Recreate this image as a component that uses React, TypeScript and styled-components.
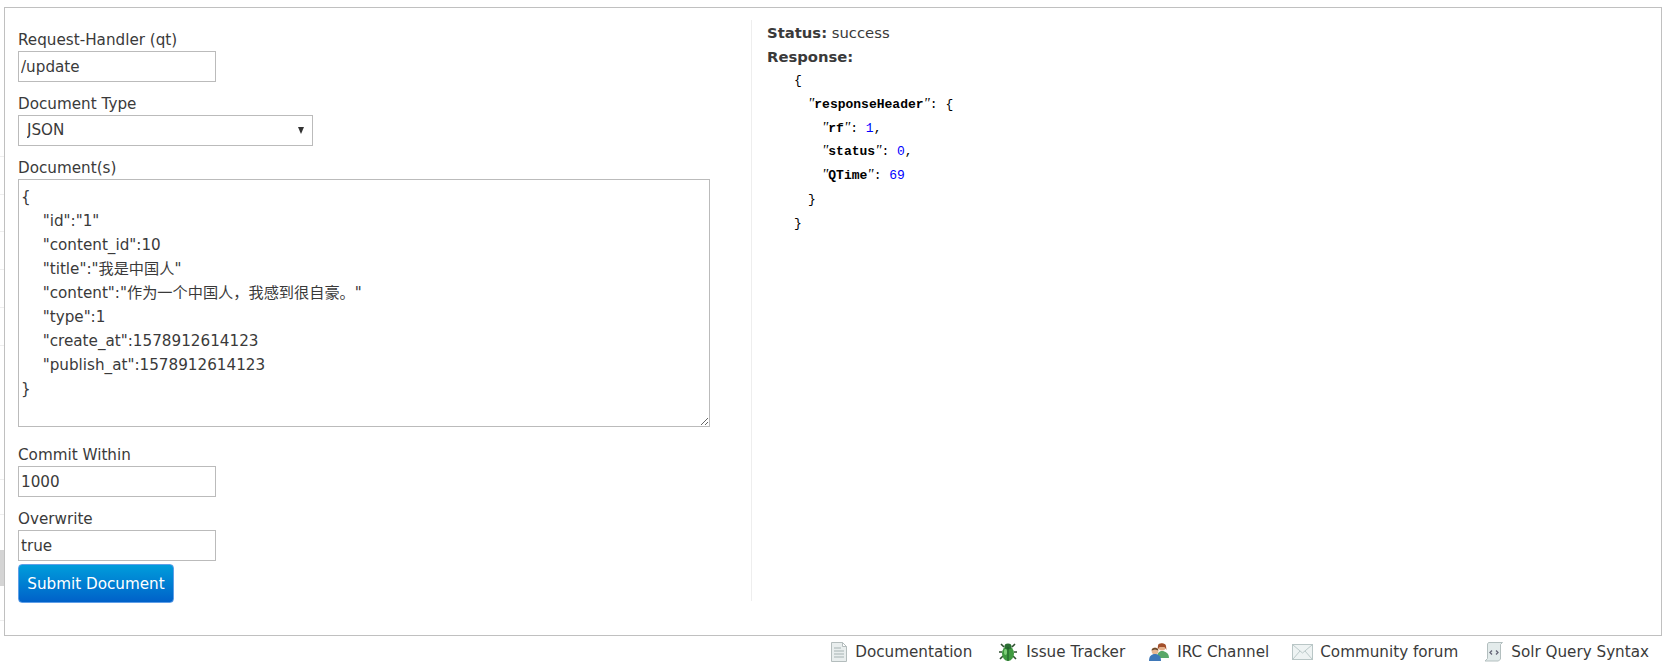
import styled, { createGlobalStyle } from 'styled-components';

const GlobalStyle = createGlobalStyle`
  html, body {
    margin: 0;
    padding: 0;
    background: #fff;
    color: #3a3a3a;
    font-family: 'DejaVu Sans', Verdana, 'Noto Sans CJK SC', sans-serif;
    font-size: 15.2px;
  }
`;

const Page = styled.div`
  position: relative;
  width: 1667px;
  height: 665px;
  overflow: hidden;
  padding: 7px 5px 0 4px;
  box-sizing: border-box;
`;

const Sidebar = styled.div`
  position: absolute;
  left: 0;
  top: 0;
  width: 4px;
`;

const SidebarRow = styled.div<{ $top: number; $height: number; $color: string }>`
  position: absolute;
  left: 0;
  width: 4px;
  top: ${(p) => p.$top}px;
  height: ${(p) => p.$height}px;
  background: ${(p) => p.$color};
`;

const Frame = styled.div`
  box-sizing: border-box;
  height: 629px;
  border: 1px solid #c0c0c0;
  padding: 12px 0 0 13px;
  display: flex;
  align-items: flex-start;
`;

const FormColumn = styled.form`
  width: 734px;
  height: 581px;
  padding-top: 10px;
  box-sizing: border-box;
  border-right: 1px solid #eee;
  flex-shrink: 0;
`;

const FieldLabel = styled.label`
  display: block;
  height: 21px;
  line-height: 20px;
  color: #3a3a3a;
  white-space: nowrap;
`;

const Field = styled.div`
  margin-bottom: 12px;
  &:last-of-type {
    margin-bottom: 3px;
  }
`;

const TextInput = styled.input`
  display: block;
  box-sizing: border-box;
  width: 198px;
  height: 31px;
  border: 1px solid #bbb;
  border-radius: 0;
  padding: 1px 2px 0;
  margin: 0;
  font: inherit;
  color: #3a3a3a;
  background: #fff;
  outline: none;
`;

const SelectWrap = styled.div`
  position: relative;
  width: 295px;
  &::after {
    content: '';
    position: absolute;
    right: 9px;
    top: 12px;
    border-left: 3.5px solid transparent;
    border-right: 3.5px solid transparent;
    border-top: 7px solid #333;
  }
`;

const Select = styled.select`
  display: block;
  box-sizing: border-box;
  width: 100%;
  height: 31px;
  border: 1px solid #bbb;
  border-radius: 0;
  padding: 0 8px 1px;
  margin: 0;
  font: inherit;
  color: #3a3a3a;
  background: #fff;
  appearance: none;
  outline: none;
`;

const DocumentArea = styled.textarea`
  display: block;
  box-sizing: border-box;
  width: 692px;
  height: 248px;
  margin: 0 0 18px;
  border: 1px solid #bbb;
  border-radius: 0;
  padding: 5px 2px;
  font: inherit;
  line-height: 24px;
  word-spacing: 0.6px;
  color: #3a3a3a;
  background: #fff;
  outline: none;
  resize: both;
  overflow: hidden;
`;

const SubmitButton = styled.button`
  display: block;
  box-sizing: border-box;
  width: 156px;
  height: 39px;
  padding: 0;
  border: 1px solid #5f9fe8;
  border-radius: 4px;
  background: linear-gradient(#009ddb, #0061c9);
  color: #fff;
  font: inherit;
`;

const ResultColumn = styled.div`
  padding: 1px 0 0 15px;
`;

const StatusLine = styled.div`
  height: 24px;
  line-height: 24px;
  color: #3a3a3a;
  font-size: 14.8px;
`;

const StrongLabel = styled.strong`
  font-weight: bold;
`;

const JsonLine = styled.div<{ $depth: number }>`
  height: 23.8px;
  line-height: 24px;
  padding-left: ${(p) => 27 + p.$depth * 14}px;
  font-family: 'Liberation Mono', monospace;
  font-size: 13px;
  color: #000;
  white-space: pre;
`;

const JsonKey = styled.b`
  font-weight: bold;
`;

const JsonQuote = styled.i`
  font-family: 'Liberation Serif', serif;
  font-size: 15px;
  line-height: 0;
  font-weight: normal;
`;

const JsonNumber = styled.span`
  color: #00f;
`;

const Footer = styled.div`
  display: flex;
  justify-content: flex-end;
  align-items: center;
  height: 31px;
  padding-right: 13px;
  font-size: 15.2px;
`;

const FooterLink = styled.a<{ $gap: number; $left: number }>`
  display: flex;
  align-items: center;
  gap: ${(p) => p.$gap}px;
  margin-left: ${(p) => p.$left}px;
  color: #3a3a3a;
  text-decoration: none;
  white-space: nowrap;
`;

const DocIcon = () => (
  <svg width="18" height="20" viewBox="0 0 18 20">
    <path d="M1.5.5h11l4 4v15h-15z" fill="#e9eeee" stroke="#b4bdbd" />
    <path d="M12.5.5v4h4z" fill="#fff" stroke="#b4bdbd" />
    <path d="M4 6h7M4 9h10M4 12h10M4 15h10" stroke="#bcc6c6" strokeWidth="1.4" />
  </svg>
);

const BugIcon = () => (
  <svg width="20" height="20" viewBox="0 0 20 20">
    <path
      d="M6 5 3 2M14 5l3-3M4 10H1M16 10h3M5 14l-3 3M15 14l3 3"
      stroke="#2f4f2f"
      strokeWidth="1.6"
    />
    <ellipse cx="10" cy="11.5" rx="6" ry="7.5" fill="#3f9a3f" />
    <ellipse cx="10" cy="4.5" rx="3.6" ry="3" fill="#2b6f33" />
    <path d="M10 5v14" stroke="#1f5a28" strokeWidth="1" />
    <ellipse cx="7.5" cy="10" rx="1.5" ry="3" fill="#7fcf78" />
  </svg>
);

const UsersIcon = () => (
  <svg width="22" height="20" viewBox="0 0 22 20">
    <circle cx="14" cy="5" r="3.6" fill="#e5b08a" />
    <path d="M10 3.5C10 .5 18 .5 18 4l.5 4-2-3h-5l-2 3z" fill="#a3502c" />
    <path d="M9 16c0-5 2-7 5-7s7 2 7 7z" fill="#5aa869" />
    <circle cx="7" cy="9" r="3.4" fill="#e8b893" />
    <path d="M3.6 8.5C3.5 4.8 10.5 4.8 10.4 8.5L7 7.4z" fill="#6a4a2c" />
    <path d="M1 19c0-5 2.500-7 6-7s6 2 6 7z" fill="#3f78b8" />
  </svg>
);

const MailIcon = () => (
  <svg width="21" height="16" viewBox="0 0 21 16">
    <rect x=".5" y=".5" width="20" height="15" fill="#eef3f3" stroke="#b9c6c6" />
    <path d="M1 1l9.500 8L20 1M1 15l7-8M20 15l-7-8" fill="none" stroke="#bccaca" />
  </svg>
);

const SyntaxIcon = () => (
  <svg width="20" height="21" viewBox="0 0 20 21">
    <path d="M4.500 1.500h14l-2 2v14.500l-2 2H1l2.500-2.500V3z" fill="#e3ebeb" stroke="#b3bfbf" />
    <path d="M8 9.500 6 11.500l2 2M12 9.500l2 2-2 2" fill="none" stroke="#667" strokeWidth="1.3" />
  </svg>
);

const sidebarRows = [
  { top: 156, height: 1, color: '#eee' },
  { top: 194, height: 1, color: '#eee' },
  { top: 231, height: 1, color: '#eee' },
  { top: 269, height: 1, color: '#eee' },
  { top: 307, height: 1, color: '#eee' },
  { top: 345, height: 1, color: '#eee' },
  { top: 479, height: 1, color: '#eee' },
  { top: 514, height: 1, color: '#eee' },
  { top: 550, height: 36, color: '#d4d4d4' },
  { top: 620, height: 1, color: '#eee' },
];

const documentText = `{
    "id":"1"
    "content_id":10
    "title":"我是中国人"
    "content":"作为一个中国人，我感到很自豪。"
    "type":1
    "create_at":1578912614123
    "publish_at":1578912614123
}`;

const Key = ({ name }: { name: string }) => (
  <>
    <JsonQuote>"</JsonQuote>
    <JsonKey>{name}</JsonKey>
    <JsonQuote>"</JsonQuote>
  </>
);

const App = () => (
  <Page>
    <GlobalStyle />
    <Sidebar>
      {sidebarRows.map((r) => (
        <SidebarRow key={r.top} $top={r.top} $height={r.height} $color={r.color} />
      ))}
    </Sidebar>
    <Frame>
      <FormColumn onSubmit={(e) => e.preventDefault()}>
        <Field>
          <FieldLabel>Request-Handler (qt)</FieldLabel>
          <TextInput defaultValue="/update" />
        </Field>
        <Field>
          <FieldLabel>Document Type</FieldLabel>
          <SelectWrap>
            <Select defaultValue="JSON">
              <option>JSON</option>
            </Select>
          </SelectWrap>
        </Field>
        <FieldLabel>Document(s)</FieldLabel>
        <DocumentArea defaultValue={documentText} />
        <Field>
          <FieldLabel>Commit Within</FieldLabel>
          <TextInput defaultValue="1000" />
        </Field>
        <Field>
          <FieldLabel>Overwrite</FieldLabel>
          <TextInput defaultValue="true" />
        </Field>
        <SubmitButton type="submit">Submit Document</SubmitButton>
      </FormColumn>
      <ResultColumn>
        <StatusLine>
          <StrongLabel>Status:</StrongLabel> success
        </StatusLine>
        <StatusLine>
          <StrongLabel>Response:</StrongLabel>
        </StatusLine>
        <JsonLine $depth={0}>{'{'}</JsonLine>
        <JsonLine $depth={1}>
          <Key name="responseHeader" />: {'{'}
        </JsonLine>
        <JsonLine $depth={2}>
          <Key name="rf" />: <JsonNumber>1</JsonNumber>,
        </JsonLine>
        <JsonLine $depth={2}>
          <Key name="status" />: <JsonNumber>0</JsonNumber>,
        </JsonLine>
        <JsonLine $depth={2}>
          <Key name="QTime" />: <JsonNumber>69</JsonNumber>
        </JsonLine>
        <JsonLine $depth={1}>{'}'}</JsonLine>
        <JsonLine $depth={0}>{'}'}</JsonLine>
      </ResultColumn>
    </Frame>
    <Footer>
      <FooterLink $gap={7} $left={0}>
        <DocIcon />
        Documentation
      </FooterLink>
      <FooterLink $gap={8} $left={26}>
        <BugIcon />
        Issue Tracker
      </FooterLink>
      <FooterLink $gap={7} $left={23}>
        <UsersIcon />
        IRC Channel
      </FooterLink>
      <FooterLink $gap={7} $left={23}>
        <MailIcon />
        Community forum
      </FooterLink>
      <FooterLink $gap={7} $left={26}>
        <SyntaxIcon />
        Solr Query Syntax
      </FooterLink>
    </Footer>
  </Page>
);

export default App;
